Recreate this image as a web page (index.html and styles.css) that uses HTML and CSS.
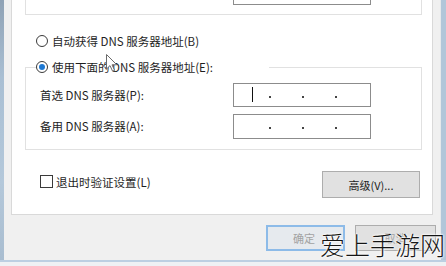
FILE: index.html
```html
<!DOCTYPE html>
<html lang="zh-CN">
<head>
<meta charset="utf-8">
<title>DNS</title>
<link rel="stylesheet" href="styles.css">
</head>
<body>
<div class="window">
  <div class="body-row">
    <div class="edge edge-left"></div>
    <div class="main">
      <div class="panel">
        <div class="group-top"><div class="field field-top"></div></div>
        <label class="option option-auto"><span class="radio"></span><span class="opt-text">自动获得 DNS 服务器地址(B)</span></label>
        <fieldset class="group-dns">
          <legend class="option option-manual"><span class="radio checked"></span><span class="opt-text">使用下面的 DNS 服务器地址(E):</span></legend>
          <div class="row">
            <span class="label">首选 DNS 服务器(P):</span>
            <div class="field ip"><span class="caret"></span><span class="dot first"></span><span class="dot"></span><span class="dot"></span></div>
          </div>
          <div class="row row-second">
            <span class="label">备用 DNS 服务器(A):</span>
            <div class="field ip"><span class="dot first nocaret"></span><span class="dot"></span><span class="dot"></span></div>
          </div>
        </fieldset>
        <div class="bottom-row">
          <label class="check"><span class="box"></span><span class="opt-text">退出时验证设置(L)</span></label>
          <div class="btn btn-adv">高级(V)...</div>
        </div>
      </div>
      <div class="footer">
        <div class="btn btn-ok">确定</div>
        <div class="btn btn-cancel">取消</div>
      </div>
    </div>
    <div class="edge edge-right"></div>
  </div>
  <div class="bottom-edge"></div>
</div>
<svg class="cursor" width="12" height="18" viewBox="0 0 12 18"><path d="M0.5 0.5 L0.5 15 L4 11.6 L6.6 17.2 L8.6 16.3 L6 10.8 L10.8 10.8 Z" fill="#fff" stroke="#6a6a6a" stroke-width="1" stroke-linejoin="round"/></svg>
<div class="watermark">爱上手游网</div>
</body>
</html>
```
FILE: styles.css
```css
* { box-sizing: border-box; }
html, body { margin: 0; padding: 0; }
body {
  width: 446px;
  height: 266px;
  overflow: hidden;
  background: #f0f0f0;
  font-family: "Noto Sans CJK SC", "Noto Sans", sans-serif;
  font-size: 11.5px;
  color: #1e1e1e;
  position: relative;
}
.window { display: flex; flex-direction: column; height: 266px; }
.body-row { display: flex; height: 260px; }
.edge { flex: none; }
.edge-left { width: 4px; background: linear-gradient(#8fa2b5, #a9bfd3 30%, #b4c8da 70%, #a9bdd0); }
.edge-right { width: 6px; background: linear-gradient(90deg, #e6e8ea 0 1px, #b2c6d9 1px); }
.main { flex: 1; display: flex; flex-direction: column; }
.panel {
  margin-left: 7px;
  width: 422px;
  height: 215px;
  background: #fff;
  border: 1px solid #d9d9d9;
  border-top: none;
}
.group-top {
  margin-left: 13px;
  width: 397px;
  height: 15px;
  border: 1px solid #e1e1e1;
  border-top: none;
}
.field-top {
  margin-left: 207px;
  width: 138px;
  height: 5px;
  border: 1px solid #8c8c8c;
  border-top: none;
}
.option { display: flex; align-items: center; height: 12px; line-height: 12px; }
.option-auto { margin: 20px 0 0 24px; }
.radio {
  width: 12px; height: 12px; flex: none;
  border: 1px solid #3a3a3a;
  border-radius: 50%;
  background: #fff;
  display: flex; align-items: center; justify-content: center;
}
.radio.checked::after {
  content: "";
  width: 6px; height: 6px; border-radius: 50%;
  background: #1e78d2;
}
.opt-text { margin-left: 4px; white-space: nowrap; }
.group-dns {
  margin: 14px 0 0 13px;
  padding: 10px 0 11px 0;
  width: 397px;
  min-width: 0;
  border: 1px solid #e1e1e1;
}
.option-manual { margin-left: 10px; padding: 0 56px 0 0; }
.row { display: flex; align-items: center; height: 24px; margin-left: 14px; }
.row-second { margin-top: 7px; }
.label { width: 193px; white-space: nowrap; }
.field.ip {
  width: 138px; height: 24px;
  border: 1px solid #8c8c8c;
  background: #fff;
  display: flex; align-items: flex-start;
}
.row-second .field.ip { height: 25px; }
.caret { width: 1px; height: 15px; margin: 3px 0 0 18px; background: #111; }
.dot { width: 2px; height: 2px; background: #444; margin: 12px 0 0 31px; }
.dot.first { margin-left: 16px; }
.dot.first.nocaret { margin-left: 35px; }
.bottom-row {
  margin-top: 21px;
  display: flex; justify-content: space-between; align-items: flex-start;
  padding: 0 12px 0 28px;
}
.check { display: flex; align-items: center; margin-top: 4px; height: 13px; }
.box { width: 13px; height: 13px; border: 1px solid #3a3a3a; background: #fff; flex: none; }
.check .opt-text { margin-left: 3px; }
.btn {
  display: flex; align-items: center; justify-content: center;
  height: 26px;
  background: #e1e1e1;
  border: 1px solid #adadad;
  font-size: 11px;
}
.btn-adv { width: 98px; height: 27px; }
.footer {
  flex: 1;
  display: flex; justify-content: flex-end; align-items: flex-start;
  gap: 10px;
  padding: 10px 4px 0 0;
}
.btn-ok { width: 79px; border: 2px solid #8dbbe8; background: #e6eaee; color: #a2a2a2; padding-right: 3px; }
.btn-cancel { width: 81px; color: #a2a2a2; }
.bottom-edge { height: 6px; border-top: 2px solid #bccfe2; background: #eef1f4; }
.cursor { position: absolute; left: 106px; top: 54px; }
.watermark {
  position: absolute;
  left: 320px; top: 229px;
  font-size: 25px; line-height: 30px;
  font-weight: 300;
  color: #151515;
  white-space: nowrap;
  text-shadow: 0 0 2px #fff, 0 0 2px #fff, 0 0 3px #fff;
}
```
